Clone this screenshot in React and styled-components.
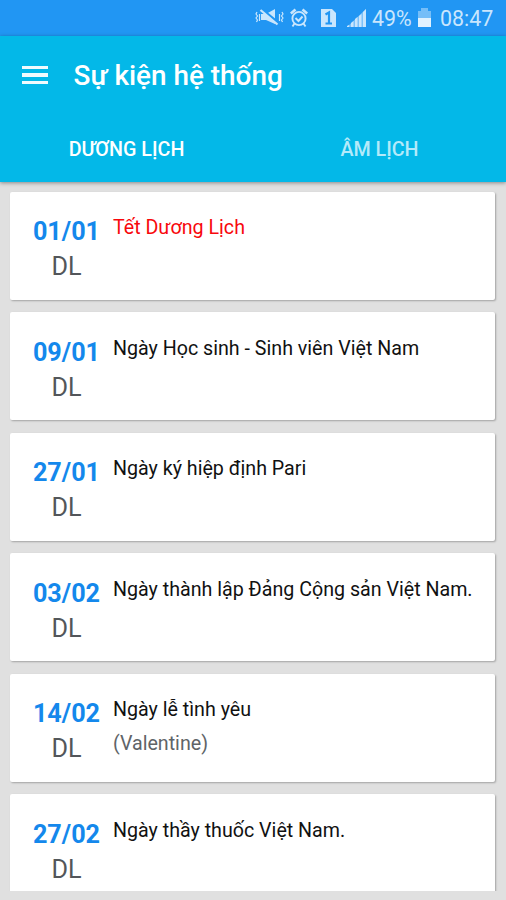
import React from "react";
import styled, { createGlobalStyle } from "styled-components";

const GlobalStyle = createGlobalStyle`
  * {
    box-sizing: border-box;
  }

  body {
    margin: 0;
    background: #e0e0e0;
    font-family: Roboto, "Noto Sans", sans-serif;
  }
`;

const Screen = styled.div`
  display: flex;
  flex-direction: column;
  height: 900px;
  padding-bottom: 9.5px;
  overflow: hidden;
  background: #e0e0e0;
`;

const StatusBar = styled.div`
  flex: none;
  display: flex;
  align-items: center;
  justify-content: flex-end;
  height: 36px;
  padding-right: 10px;
  background: #2196f3;
  color: #c9e6fd;
`;

const StatusIcon = styled.svg`
  flex: none;
  display: block;
  margin-right: ${props => props.$gap}px;
`;

const StatusText = styled.span`
  width: ${props => props.$width}px;
  font-size: 21.4px;
  line-height: 36px;
  padding-top: 1px;
  white-space: nowrap;
`;

const Header = styled.header`
  flex: none;
  position: relative;
  z-index: 1;
  height: 145.7px;
  background: #03b8e8;
  box-shadow: 0 1px 4px rgba(0, 0, 0, 0.4);
  color: #fff;
`;

const Toolbar = styled.div`
  display: flex;
  align-items: center;
  height: 78px;
  padding-left: 21.5px;
`;

const MenuButton = styled.button`
  display: flex;
  flex-direction: column;
  gap: 4px;
  width: 26px;
  margin-right: 26px;
  padding: 0;
  border: 0;
  background: none;
`;

const MenuLine = styled.span`
  height: 3.3px;
  background: #f0fbfe;
`;

const Title = styled.h1`
  margin: 0;
  padding-top: 2px;
  font-size: 27.9px;
  font-weight: 500;
  line-height: 36px;
  white-space: nowrap;
`;

const Tabs = styled.nav`
  display: flex;
  height: 67.7px;
`;

const Tab = styled.a`
  flex: 1;
  padding-top: 21px;
  color: ${props => (props.$active ? "#fff" : "#b3eafa")};
  font-size: 19.7px;
  font-weight: 500;
  line-height: 30px;
  text-align: center;
`;

const List = styled.main`
  flex: 1;
  display: flex;
  flex-direction: column;
  gap: 12.5px;
  min-height: 0;
  padding: 10px 11.5px 0 10px;
  overflow: hidden;
`;

const Card = styled.article`
  flex: none;
  display: flex;
  height: 108px;
  padding: 22.5px 0 0 22.5px;
  border-radius: 2px;
  background: #fff;
  box-shadow: 1px 1px 2px rgba(0, 0, 0, 0.28);
`;

const DateColumn = styled.div`
  flex: none;
  width: 68px;
  margin-right: 12.5px;
  text-align: center;
`;

const Day = styled.div`
  color: #1488ec;
  font-size: 25.2px;
  font-weight: 700;
  line-height: 35px;
`;

const Calendar = styled.div`
  color: #53565a;
  font-size: 25.2px;
  line-height: 35px;
`;

const Name = styled.div`
  color: ${props => (props.$holiday ? "#f8080c" : "#111")};
  font-size: 19.65px;
  line-height: 27px;
  white-space: nowrap;
`;

const Note = styled.div`
  margin-top: 7px;
  color: #606468;
  font-size: 19.65px;
  line-height: 27px;
`;

const events = [
  { day: "01/01", name: "Tết Dương Lịch", holiday: true },
  { day: "09/01", name: "Ngày Học sinh - Sinh viên Việt Nam" },
  { day: "27/01", name: "Ngày ký hiệp định Pari" },
  { day: "03/02", name: "Ngày thành lập Đảng Cộng sản Việt Nam." },
  { day: "14/02", name: "Ngày lễ tình yêu", note: "(Valentine)" },
  { day: "27/02", name: "Ngày thầy thuốc Việt Nam." }
];

const MuteIcon = () => (
  <StatusIcon $gap={6} width="29" height="20" viewBox="0 0 29 20">
    <path d="M6 6h5l9-5v15l-9-4H6z" fill="currentColor" />
    <path d="M6 0.500l17 14" stroke="#2196f3" strokeWidth="2.500" />
    <path d="M5.500 2l17 14.500" stroke="currentColor" strokeWidth="2.200" />
    <path
      d="M2 4l-1 2 1.500 2L1 10l1.500 2-1 2M4.500 6v7M24.500 6v7M27 4l1 2-1.500 2 1.500 2-1.500 2 1 2"
      fill="none"
      stroke="currentColor"
      strokeWidth="1.200"
    />
  </StatusIcon>
);

const AlarmIcon = () => (
  <StatusIcon $gap={13} width="18" height="20" viewBox="0 0 18 20">
    <g fill="none" stroke="currentColor" strokeWidth="1.900">
      <circle cx="9" cy="10.500" r="6.600" />
      <path d="M4.500 15.500l-2 3M13.500 15.500l2 3M5.500 10l3 3 4-4.500" />
      <path d="M0.800 5.500l4.700-4M17.200 5.500l-4.700-4" strokeWidth="2.600" />
    </g>
  </StatusIcon>
);

const SimIcon = () => (
  <StatusIcon $gap={11} width="15" height="20" viewBox="0 0 15 20">
    <path d="M0 1h11l4 4v14H0z" fill="currentColor" />
    <path
      d="M4.500 6.500l3.500-2v11M4.500 15.500h6.500"
      fill="none"
      stroke="#2196f3"
      strokeWidth="2.200"
    />
  </StatusIcon>
);

const SignalIcon = () => (
  <StatusIcon $gap={6} width="19" height="20" viewBox="0 0 19 20">
    <path d="M0 19L19 1v18z" fill="currentColor" opacity="0.55" />
    <path
      d="M0 19v-1l2-1v2zM4 19v-4l2.500-2v6zM8 19v-8l2.500-2v10zM12 19V8l2.500-2v13zM16 19V4l3-3v18z"
      fill="currentColor"
    />
  </StatusIcon>
);

const BatteryIcon = () => (
  <StatusIcon $gap={9} width="13" height="20" viewBox="0 0 13 20">
    <path d="M0 3h3V0h7v3h3v8H0z" fill="currentColor" opacity="0.5" />
    <path d="M0 10h13v9H0z" fill="#e0f2ff" />
  </StatusIcon>
);

const App = () => (
  <Screen>
    <GlobalStyle />
    <StatusBar>
      <MuteIcon />
      <AlarmIcon />
      <SimIcon />
      <SignalIcon />
      <StatusText $width={46}>49%</StatusText>
      <BatteryIcon />
      <StatusText $width={56}>08:47</StatusText>
    </StatusBar>
    <Header>
      <Toolbar>
        <MenuButton aria-label="Menu">
          <MenuLine />
          <MenuLine />
          <MenuLine />
        </MenuButton>
        <Title>Sự kiện hệ thống</Title>
      </Toolbar>
      <Tabs>
        <Tab $active>DƯƠNG LỊCH</Tab>
        <Tab>ÂM LỊCH</Tab>
      </Tabs>
    </Header>
    <List>
      {events.map(event => (
        <Card key={event.day}>
          <DateColumn>
            <Day>{event.day}</Day>
            <Calendar>DL</Calendar>
          </DateColumn>
          <div>
            <Name $holiday={event.holiday}>{event.name}</Name>
            {event.note && <Note>{event.note}</Note>}
          </div>
        </Card>
      ))}
    </List>
  </Screen>
);

export default App;
